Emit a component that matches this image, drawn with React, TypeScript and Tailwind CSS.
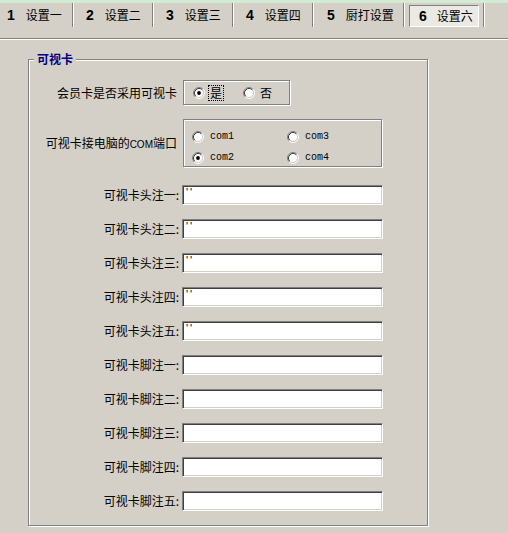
import React from "react";

function Radio({ checked }: { checked?: boolean }) {
  return (
    <svg width="12" height="12" viewBox="0 0 12 12" className="shrink-0 block">
      <circle cx="6" cy="6" r="4.2" fill="#ffffff" />
      <path d="M2.11 9.89 A5.5 5.5 0 0 1 9.89 2.11" stroke="#808080" strokeWidth="1" fill="none" />
      <path d="M9.89 2.11 A5.5 5.5 0 0 1 2.11 9.89" stroke="#ffffff" strokeWidth="1" fill="none" />
      <path d="M2.82 9.18 A4.5 4.5 0 0 1 9.18 2.82" stroke="#404040" strokeWidth="1" fill="none" />
      <path d="M9.18 2.82 A4.5 4.5 0 0 1 2.82 9.18" stroke="#d4d0c8" strokeWidth="1" fill="none" />
      {checked && <circle cx="6" cy="6" r="1.9" fill="#000000" />}
    </svg>
  );
}

function Sep() {
  return (
    <div className="flex h-full shrink-0">
      <div className="w-px h-full bg-[#808080]" />
      <div className="w-px h-full bg-white" />
    </div>
  );
}

function Tab({ n, label, w, pl }: { n: string; label: string; w: string; pl: string }) {
  return (
    <div className={`flex items-center h-full shrink-0 ${w} ${pl}`}>
      <span className="font-bold text-[14px] font-['Liberation_Sans',sans-serif] leading-none">{n}</span>
      <span className="ml-[11px] text-[12px] leading-none">{label}</span>
    </div>
  );
}

const fieldLabels = [
  "可视卡头注一:",
  "可视卡头注二:",
  "可视卡头注三:",
  "可视卡头注四:",
  "可视卡头注五:",
  "可视卡脚注一:",
  "可视卡脚注二:",
  "可视卡脚注三:",
  "可视卡脚注四:",
  "可视卡脚注五:",
];

export default function App() {
  return (
    <div className="w-[508px] h-[533px] bg-[#d4d0c8] text-black font-['Noto_Sans_CJK_SC','Liberation_Sans',sans-serif] overflow-hidden">
      <div className="h-[3px] bg-[#d2ebd2]" />
      {/* tabs */}
      <div className="flex h-[24px]">
        <div className="flex items-center h-full shrink-0 w-[72px] pl-[7px]">
          <span className="font-bold text-[14px] font-['Liberation_Sans',sans-serif] leading-none">1</span>
          <span className="ml-[11px] text-[12px] leading-none">设置一</span>
        </div>
        <Sep />
        <Tab n="2" label="设置二" w="w-[78px]" pl="pl-[12px]" />
        <Sep />
        <Tab n="3" label="设置三" w="w-[78px]" pl="pl-[12px]" />
        <Sep />
        <Tab n="4" label="设置四" w="w-[78px]" pl="pl-[12px]" />
        <Sep />
        <Tab n="5" label="厨打设置" w="w-[89px]" pl="pl-[13px]" />
        <Sep />
        <div className="w-[78px] h-full shrink-0 pt-[2px]">
          <div className="ml-[4px] w-[70px] h-[22px] flex items-center pl-[9px] border-t border-l border-[#808080] border-b border-r border-b-white border-r-white bg-[#ebe9e4]">
            <span className="font-bold text-[14px] font-['Liberation_Sans',sans-serif] leading-none">6</span>
            <span className="ml-[10px] text-[12px] leading-none">设置六</span>
          </div>
        </div>
        <Sep />
      </div>
      <div className="h-[11px]" />
      <div className="h-px bg-[#808080]" />
      <div className="h-px bg-white" />

      {/* group box */}
      <div className="relative ml-[28px] mt-[19px] w-[400px] h-[467px] border border-[#808080] shadow-[inset_1px_1px_0_#ffffff,1px_1px_0_#ffffff]">
        <div className="absolute left-[5px] top-[-9px] px-[3px] bg-[#d4d0c8] text-[#000080] font-bold text-[12px] leading-[16px]">
          可视卡
        </div>

        <div className="flex flex-col pt-[20px]">
          {/* row 1 */}
          <div className="flex items-center">
            <div className="w-[154px] pr-[6px] text-right text-[12px] leading-none">会员卡是否采用可视卡</div>
            <div className="w-[107px] h-[25px] border border-[#808080] shadow-[inset_1px_1px_0_#ffffff,1px_1px_0_#ffffff] flex items-center pl-[9px]">
              <Radio checked />
              <span className="ml-[3px] px-px border border-dotted border-black text-[12px] leading-[14px]">是</span>
              <div className="ml-[19px]">
                <Radio />
              </div>
              <span className="ml-[5px] text-[12px] leading-[14px]">否</span>
            </div>
          </div>

          {/* row 2 */}
          <div className="flex items-center mt-[14px]">
            <div className="w-[154px] pr-[6px] text-right text-[12px] leading-none whitespace-nowrap">
              可视卡接电脑的<span className="text-[10px] font-['Liberation_Sans_Narrow','Liberation_Sans',sans-serif]">COM</span>端口
            </div>
            <div className="w-[199px] h-[48px] border border-[#808080] shadow-[inset_1px_1px_0_#ffffff,1px_1px_0_#ffffff] pl-[8px] pt-[9px] grid grid-cols-[95px_95px] gap-y-[6px] font-['Liberation_Mono',monospace] text-[10px] leading-[12px]">
              <div className="flex items-center">
                <Radio />
                <span className="ml-[6px]">com1</span>
              </div>
              <div className="flex items-center">
                <Radio />
                <span className="ml-[6px]">com3</span>
              </div>
              <div className="flex items-center">
                <Radio checked />
                <span className="ml-[6px]">com2</span>
              </div>
              <div className="flex items-center">
                <Radio />
                <span className="ml-[6px]">com4</span>
              </div>
            </div>
          </div>

          {/* inputs */}
          <div className="flex flex-col gap-[14px] mt-[18px]">
            {fieldLabels.map((l, i) => (
              <div key={l} className="flex items-center">
                <div className="w-[153px] pr-[3px] text-right text-[12px] leading-none whitespace-nowrap">{l}</div>
                <div className="w-[201px] h-[20px] bg-white border-t border-l border-[#808080] border-b border-r border-b-white border-r-white shadow-[inset_1px_1px_0_#404040,inset_-1px_-1px_0_#d4d0c8] pl-[3px] pt-[1px] flex text-[11px] leading-[11px] font-['Liberation_Sans',sans-serif]">
                  {i < 5 && (
                    <>
                      <span>'</span>
                      <span className="ml-[2px]">'</span>
                    </>
                  )}
                </div>
              </div>
            ))}
          </div>
        </div>
      </div>
    </div>
  );
}
